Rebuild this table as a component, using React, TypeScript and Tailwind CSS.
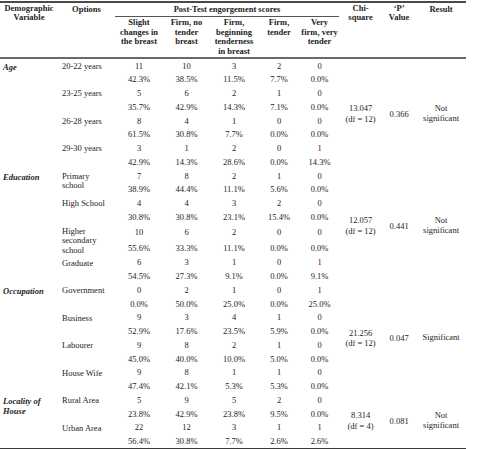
const GROUPS = [
  {
    name: ['Age'],
    chi: '13.047',
    df: '(df = 12)',
    p: '0.366',
    result: ['Not', 'significant'],
    options: [
      { label: ['20-22 years'], n: ['11', '10', '3', '2', '0'], pct: ['42.3%', '38.5%', '11.5%', '7.7%', '0.0%'] },
      { label: ['23-25 years'], n: ['5', '6', '2', '1', '0'], pct: ['35.7%', '42.9%', '14.3%', '7.1%', '0.0%'] },
      { label: ['26-28 years'], n: ['8', '4', '1', '0', '0'], pct: ['61.5%', '30.8%', '7.7%', '0.0%', '0.0%'] },
      { label: ['29-30 years'], n: ['3', '1', '2', '0', '1'], pct: ['42.9%', '14.3%', '28.6%', '0.0%', '14.3%'] },
    ],
  },
  {
    name: ['Education'],
    chi: '12.057',
    df: '(df = 12)',
    p: '0.441',
    result: ['Not', 'significant'],
    options: [
      { label: ['Primary', 'school'], n: ['7', '8', '2', '1', '0'], pct: ['38.9%', '44.4%', '11.1%', '5.6%', '0.0%'] },
      { label: ['High School'], n: ['4', '4', '3', '2', '0'], pct: ['30.8%', '30.8%', '23.1%', '15.4%', '0.0%'] },
      { label: ['Higher', 'secondary', 'school'], n: ['10', '6', '2', '0', '0'], pct: ['55.6%', '33.3%', '11.1%', '0.0%', '0.0%'] },
      { label: ['Graduate'], n: ['6', '3', '1', '0', '1'], pct: ['54.5%', '27.3%', '9.1%', '0.0%', '9.1%'] },
    ],
  },
  {
    name: ['Occupation'],
    chi: '21.256',
    df: '(df = 12)',
    p: '0.047',
    result: ['Significant'],
    options: [
      { label: ['Government'], n: ['0', '2', '1', '0', '1'], pct: ['0.0%', '50.0%', '25.0%', '0.0%', '25.0%'] },
      { label: ['Business'], n: ['9', '3', '4', '1', '0'], pct: ['52.9%', '17.6%', '23.5%', '5.9%', '0.0%'] },
      { label: ['Labourer'], n: ['9', '8', '2', '1', '0'], pct: ['45.0%', '40.0%', '10.0%', '5.0%', '0.0%'] },
      { label: ['House Wife'], n: ['9', '8', '1', '1', '0'], pct: ['47.4%', '42.1%', '5.3%', '5.3%', '0.0%'] },
    ],
  },
  {
    name: ['Locality of', 'House'],
    chi: '8.314',
    df: '(df = 4)',
    p: '0.081',
    result: ['Not', 'significant'],
    options: [
      { label: ['Rural Area'], n: ['5', '9', '5', '2', '0'], pct: ['23.8%', '42.9%', '23.8%', '9.5%', '0.0%'] },
      { label: ['Urban Area'], n: ['22', '12', '3', '1', '1'], pct: ['56.4%', '30.8%', '7.7%', '2.6%', '2.6%'] },
    ],
  },
];

const SUB_HEADS = [
  ['Slight', 'changes in', 'the breast'],
  ['Firm, no', 'tender', 'breast'],
  ['Firm,', 'beginning', 'tenderness', 'in breast'],
  ['Firm,', 'tender'],
  ['Very', 'firm, very', 'tender'],
];

function Lines({ lines }: { lines: string[] }) {
  return (
    <>
      {lines.map((l, i) => (
        <span key={i} className="block whitespace-nowrap">
          {l}
        </span>
      ))}
    </>
  );
}

export default function App() {
  return (
    <div className="w-[477px] h-[449px] bg-white overflow-hidden pt-[1px] text-[#1d1d1d] [font-family:'Liberation_Serif','Times_New_Roman',serif] text-[8.5px]">
      <table className="w-[466px] table-fixed border-separate border-spacing-0 border-t-2 border-b-2 border-t-[#4a4a4a] border-b-[#3a3a3a]">
        <colgroup>
          <col className="w-[58px]" />
          <col className="w-[57px]" />
          <col className="w-[48px]" />
          <col className="w-[47px]" />
          <col className="w-[48px]" />
          <col className="w-[42px]" />
          <col className="w-[39px]" />
          <col className="w-[43px]" />
          <col className="w-[34px]" />
          <col className="w-[50px]" />
        </colgroup>
        <thead className="font-bold">
          <tr className="h-[14px]">
            <th rowSpan={2} className="align-top pt-[1px] leading-[9px] border-b-2 border-[#6a6a6a] text-center">
              <Lines lines={['Demographic', 'Variable']} />
            </th>
            <th rowSpan={2} className="align-top pt-[1px] leading-[10px] border-b-2 border-[#6a6a6a] text-center">
              Options
            </th>
            <th colSpan={5} className="align-top pt-[1px] leading-[10px] border-b border-[#555] text-center">
              Post-Test engorgement scores
            </th>
            <th rowSpan={2} className="align-top pt-[1px] leading-[9px] border-b-2 border-[#6a6a6a] text-center">
              <Lines lines={['Chi-', 'square']} />
            </th>
            <th rowSpan={2} className="align-top pt-[1px] leading-[9px] border-b-2 border-[#6a6a6a] text-center">
              <Lines lines={['‘P’', 'Value']} />
            </th>
            <th rowSpan={2} className="align-top pt-[1px] leading-[10px] border-b-2 border-[#6a6a6a] text-center">
              Result
            </th>
          </tr>
          <tr className="h-[40px]">
            {SUB_HEADS.map((h, i) => (
              <th key={i} className="align-top pt-[1px] leading-[9.7px] border-b-2 border-[#6a6a6a] text-center">
                <Lines lines={h} />
              </th>
            ))}
          </tr>
        </thead>
        <tbody>
          {GROUPS.map((g) => {
            const span = g.options.length * 2;
            return g.options.flatMap((o, oi) => [
              <tr key={g.name[0] + oi + 'n'} className="h-[13.75px]">
                {oi === 0 && (
                  <td rowSpan={span} className="align-top pt-[3px] pl-[3px] leading-[10px] font-bold italic">
                    <Lines lines={g.name} />
                  </td>
                )}
                <td rowSpan={2} className="align-top pt-[3px] pl-[4px] leading-[9.6px]">
                  <Lines lines={o.label} />
                </td>
                {o.n.map((v, i) => (
                  <td key={i} className="text-center align-middle leading-[10px]">
                    {v}
                  </td>
                ))}
                {oi === 0 && (
                  <>
                    <td rowSpan={span} className="text-center align-middle leading-[10.5px]">
                      <Lines lines={[g.chi, g.df]} />
                    </td>
                    <td rowSpan={span} className="text-center align-middle leading-[10px]">
                      {g.p}
                    </td>
                    <td rowSpan={span} className="text-center align-middle leading-[9.5px]">
                      <Lines lines={g.result} />
                    </td>
                  </>
                )}
              </tr>,
              <tr key={g.name[0] + oi + 'p'} className="h-[13.75px]">
                {o.pct.map((v, i) => (
                  <td key={i} className="text-center align-middle leading-[10px]">
                    {v}
                  </td>
                ))}
              </tr>,
            ]);
          })}
        </tbody>
      </table>
    </div>
  );
}
